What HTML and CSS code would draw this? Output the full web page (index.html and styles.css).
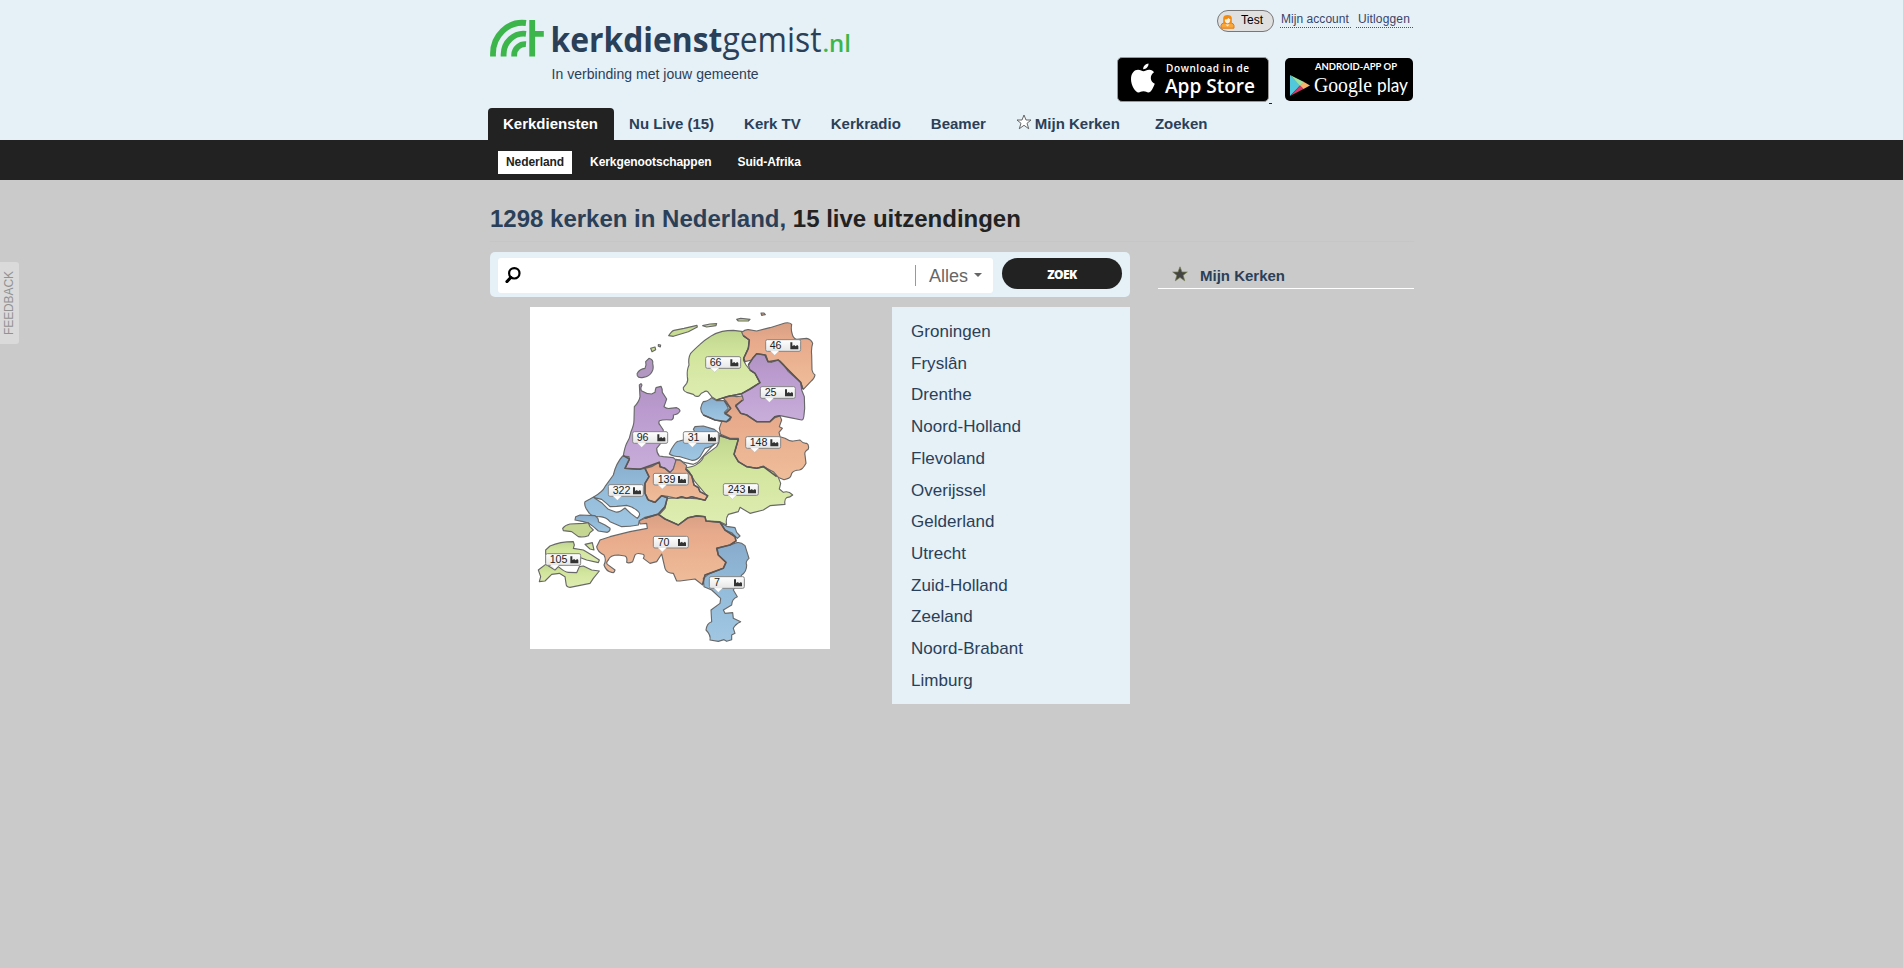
FILE: index.html
```html
<!DOCTYPE html>
<html lang="nl">
<head>
<meta charset="utf-8">
<title>Kerkdienstgemist.nl</title>
<link rel="stylesheet" href="styles.css">
</head>
<body>
<header class="header">
  <div class="wrap top">
    <div class="brand">
      <svg class="logo" viewBox="0 0 370 48" width="370" height="48">
        <g fill="none" stroke="#3cb54a" stroke-width="5.8">
          <path d="M3 40.500V38.500A29.500 31 0 0 1 36 7"/>
          <path d="M13.600 40.500V38.500A20 21 0 0 1 36 17.800"/>
          <path d="M24.200 40.500V38.500A11 11 0 0 1 36 28.200"/>
          <path d="M42.200 4V40.500M42.200 17.800H53.800" stroke-width="5.800"/>
        </g>
        <text class="logo-word" x="60.500" y="35.500" textLength="271" lengthAdjust="spacingAndGlyphs"><tspan class="logo-bold">kerkdienst</tspan>gemist</text>
        <text class="logo-nl" x="332.500" y="35.500" textLength="28.500" lengthAdjust="spacingAndGlyphs">.nl</text>
      </svg>
      <p class="tagline">In verbinding met jouw gemeente</p>
    </div>
    <div class="side">
      <div class="account">
        <span class="user">
          <svg viewBox="0 0 15 15" width="15" height="15"><path d="M1 14.200V11.500Q1.200 9.500 4 8.800L7.500 10L11 8.800Q13.800 9.500 14 11.500V14.200Z" fill="#f9a63a" stroke="#e27a10"/><path d="M3.200 8.800V4Q3.500 1 7.500 1T11.800 4V8.800L9 9.500H6Z" fill="#f08a10"/><path d="M4.800 5.500Q7.500 5.500 8.500 4Q9 5 10.300 5.300Q10.300 9.300 7.500 9.300T4.800 5.500Z" fill="#fff0dc"/><path d="M5.500 10.500L7.500 12.500L9.500 10.500" fill="#fff0dc"/></svg>
          Test</span>
        <a class="dotted">Mijn account</a>
        <a class="dotted">Uitloggen</a>
      </div>
      <div class="stores">
        <svg class="apple" viewBox="0 0 152 45" width="152" height="45">
          <rect x=".5" y=".5" width="151" height="44" rx="4.500" fill="#000" stroke="#999"/>
          <path d="M26.500 14.300C28 14.300 30 12.500 32.500 12.700C34.500 12.900 36 13.700 37 15.200C32.500 18 32.800 24.500 37.800 26.700C36.500 30 34 35.500 31.500 35.500C29.500 35.500 29 34.300 26.500 34.300C24 34.300 23.200 35.500 21.500 35.500C18.500 35.500 14 28.500 14 22.300C14 16 17.500 12.800 21 12.800C23.500 12.800 25.200 14.300 26.500 14.300ZM26.200 12.200C26 9 29 6.600 31.500 6.500C31.800 9.500 29 12.300 26.200 12.200Z" fill="#fff"/>
          <text x="49" y="15" class="store-small" textLength="83">Download in de</text>
          <text x="48" y="35.500" class="store-big" textLength="90" lengthAdjust="spacingAndGlyphs">App Store</text>
        </svg>
        <span class="dash"></span>
        <svg viewBox="0 0 128 43" width="128" height="43">
          <rect width="128" height="43" rx="5" fill="#000"/>
          <path d="M5 17L15 27.500L5 38Z" fill="#52c8dc"/><path d="M5 17L19 24L15 28Z" fill="#9ce2a0"/><path d="M5 38L15 27.500L18.500 31Z" fill="#d53a6c"/><path d="M15 27.500L18.500 23.700L25 27.500L18.500 31Z" fill="#f7b46a"/>
          <text x="30" y="12" class="play-small" textLength="82" lengthAdjust="spacingAndGlyphs">ANDROID-APP OP</text>
          <text x="29" y="34" class="play-google" textLength="58" lengthAdjust="spacingAndGlyphs">Google</text>
          <text x="92" y="34" class="play-play" textLength="31" lengthAdjust="spacingAndGlyphs">play</text>
        </svg>
      </div>
    </div>
  </div>
  <nav class="wrap tabs">
    <a class="tab active">Kerkdiensten</a><a class="tab">Nu Live (15)</a><a class="tab">Kerk TV</a><a class="tab">Kerkradio</a><a class="tab">Beamer</a><a class="tab fav"><svg viewBox="0 0 16 16" width="16" height="16"><path d="M8 1L10 6H15L11 9.300L12.700 14.700L8 11.300L3.300 14.700L5 9.300L1 6H6Z" fill="#fff" stroke="#555" stroke-width=".9"/></svg>Mijn Kerken</a><a class="tab">Zoeken</a>
  </nav>
</header>
<div class="subbar">
  <nav class="wrap subnav"><a class="sub current">Nederland</a><a class="sub">Kerkgenootschappen</a><a class="sub">Suid-Afrika</a></nav>
</div>
<main class="wrap content">
  <h1><span class="blue">1298 kerken in Nederland,</span> 15 live uitzendingen</h1>
  <div class="columns">
    <section class="main">
      <div class="search">
        <div class="field">
          <svg class="glass" viewBox="0 0 16 16" width="16" height="16"><circle cx="9.300" cy="6.300" r="5.200" fill="none" stroke="#000" stroke-width="2.200"/><path d="M5.800 10.500L2 14.500" stroke="#000" stroke-width="3.200" stroke-linecap="round"/></svg>
          <span class="filter">Alles <i class="caret"></i></span>
        </div>
        <button class="go"><span class="go-text">ZOEK</span></button>
      </div>
      <div class="row">
        <svg class="map" viewBox="0 6 900 1026" width="300" height="342">
          <defs>
            <linearGradient id="g" x2="0" y2="1"><stop stop-color="#bfd58f"/><stop offset=".35" stop-color="#d2e59d"/><stop offset="1" stop-color="#deedb2"/></linearGradient>
            <linearGradient id="o" x2="0" y2="1"><stop stop-color="#d9a085"/><stop offset=".3" stop-color="#e8ab8c"/><stop offset="1" stop-color="#efbd9a"/></linearGradient>
            <linearGradient id="p" x2="0" y2="1"><stop stop-color="#b092c2"/><stop offset=".3" stop-color="#bb9bcf"/><stop offset="1" stop-color="#c8add9"/></linearGradient>
            <linearGradient id="b" x2="0" y2="1"><stop stop-color="#88abcc"/><stop offset=".5" stop-color="#94bddb"/><stop offset="1" stop-color="#a0c6e2"/></linearGradient>
            <linearGradient id="l" x2="0" y2="1"><stop stop-color="#fff"/><stop offset=".5" stop-color="#eee"/><stop offset="1" stop-color="#ddd"/></linearGradient>
            <g id="tag"><path d="M5 0H100Q105 0 105 5V30Q105 35 100 35H39L27 47L15 35H5Q0 35 0 30V5Q0 0 5 0Z" fill="url(#l)"/><path d="M39 35H100Q105 35 105 30V5Q105 0 100 0H5Q0 0 0 5V30Q0 35 5 35H15" fill="none" stroke="#858585" stroke-width="3"/><path d="M15 35L27 47L39 35" fill="#fff" stroke="#aaa" stroke-width="1"/><path d="M74 8H80V19L86 16L89 20L95 16L98 20V29H74Z" fill="#333"/></g>
          </defs>
          <rect y="6" width="900" height="1026" fill="#fff"/>
          <g class="land">
            <path fill="url(#g)" d="M640 80L610 76Q592 76 577 79Q555 84 540 95Q522 106 510 118Q490 136 482 145Q474 160 477 180Q470 195 472 215Q475 228 470 235L460 248Q459 258 470 262L490 268Q498 278 508 272Q514 262 520 262Q528 256 533 260L545 275L560 285L590 275L635 266L660 252L690 233L675 205L660 195L648 180L640 165L655 130L658 105L640 92Z"/>
            <path fill="url(#o)" d="M635 82Q645 73 655 74L680 78L720 68L765 54Q778 51 785 58Q782 75 787 88Q790 100 800 103L830 100Q844 103 848 115Q843 130 845 150L846 195Q848 205 855 210Q853 222 842 230L820 253L812 232L785 205L750 168L725 172L714 170L708 150L680 148L665 165L645 170L641 160L655 130L658 105L640 92Z"/>
            <path fill="url(#p)" d="M680 146L705 150L714 170L725 172L745 165L760 178L775 200L812 232L815 255L823 275L824 310L822 330Q821 345 815 345L780 338L750 332L735 335L720 350L680 350L650 330L632 325L617 303L637 285L635 266L665 250L690 233L675 205L660 195L655 180L668 160Z"/>
            <path fill="url(#o)" d="M580 280L600 272L620 275L637 273L640 285L617 300L632 325L650 330L680 350L720 350L735 338L750 333L755 345L748 365L757 370L747 382L750 395L765 400Q780 410 790 408L810 405Q820 417 830 415Q838 420 835 432Q822 440 825 450L828 475Q818 494 808 495Q792 495 785 505Q782 518 775 520L762 524L740 515L725 500L700 483L680 490L650 485L625 470L612 448L620 420L625 400L600 400L572 388L568 370L575 350L600 345L585 330L602 310L590 290Z"/>
            <path fill="url(#b)" d="M545 278L560 287L583 287L595 310L583 322L603 335Q602 347 590 350Q570 350 555 345L520 330Q512 320 512 310Q514 298 520 290Q532 290 545 278Z"/>
            <path fill="url(#b)" d="M418 447Q424 430 432 420Q440 408 448 408L480 400L500 390L490 373L495 365L520 363L553 373L568 385L560 410Q555 422 525 430L510 455Q500 467 485 466L450 455Q430 455 418 447Z"/>
            <path fill="url(#g)" d="M568 393L600 402L625 403L612 448L625 470L650 485L680 490L700 485L730 500L745 517L752 535L748 552L760 562Q775 556 788 570Q780 577 770 578Q762 584 765 598L720 602L700 615L660 625L630 607L625 620L595 628Q586 640 590 660L570 650L528 648L523 635L500 632L470 640L445 660L405 642L385 632L405 610L412 580L450 578L510 582L533 575L495 530L478 500L465 488Q490 486 500 478Q520 465 520 455L560 425Q570 410 568 393Z"/>
            <path fill="url(#p)" d="M328 240L333 236L336 240Q330 250 334 257Q350 267 365 267L375 262Q376 252 378 248L393 244Q398 252 397 262L410 282L402 305Q412 312 420 310L440 308Q450 312 450 318Q445 328 430 330Q432 342 424 345Q400 343 388 347Q384 355 390 360L400 375L392 415L380 430Q380 445 388 453L400 455L430 458Q438 462 438 470L430 492L420 503L405 490L390 485L388 472L365 485L330 493L285 490L298 462L280 452Q284 428 290 415Q300 400 303 380Q312 360 312 345L313 305Q328 290 330 275Z"/>
            <path fill="url(#b)" d="M278 453L297 455L298 465L285 490L320 493L345 490L357 515L345 535V560L352 582L370 592L395 572L412 578L405 605L385 627L345 637L328 647L325 660Q300 665 275 665L240 650Q228 636 210 635Q190 636 178 625L168 610Q162 597 165 590L180 582L192 575Q218 560 225 545L250 510Q258 475 278 453Z"/>
            <path fill="#fff" d="M190 577L215 583Q230 595 240 605L260 604L290 601Q310 605 325 620Q334 628 322 640L302 625L285 609Q265 625 255 620L235 613L217 595Z"/>
            <path fill="url(#o)" d="M345 490L365 485L388 472L390 485L405 490L420 503L430 492L438 465L450 465L470 482L467 492L485 512L492 540L505 548L510 560L533 572L525 586L510 582L485 575L470 580L455 575L440 580L412 574L395 572L375 592L355 585L345 565V535L357 515Z"/>
            <path fill="url(#o)" d="M328 647L345 640L385 628L405 642L445 660L475 638L500 633L525 635L528 648L570 652L585 675L615 695L618 708L600 720L560 730L565 750L588 772L580 790L525 810L518 840L495 822L450 828L440 828L430 805Q410 805 405 790L395 747L380 770L360 775L340 760Q347 748 335 747Q320 743 315 750L308 770Q296 776 290 772Q293 757 285 753L265 750Q240 750 235 765Q227 773 232 778L255 795Q252 806 245 802Q228 799 222 780Q230 765 222 750Q202 740 200 725L210 705L240 695L300 680L352 670L350 655L330 657Z"/>
            <path fill="url(#b)" d="M573 653L590 664L615 668L620 682L630 693L622 700L605 683L585 675Z"/>
            <path fill="url(#b)" d="M620 713Q632 710 645 722L657 760Q645 770 650 780Q650 800 635 810L610 855L622 875Q605 882 605 900L580 915L585 925L608 923L610 940L632 950Q615 958 610 970L615 985L605 990V1004L590 1009L582 1004L565 1009L540 1005Q543 990 528 975Q530 955 545 950L543 915L570 895L572 880L545 855L522 845L520 820L535 808L580 790L588 772L565 750L562 730L600 720Z"/>
            <path fill="url(#b)" d="M135 645L137 635L150 630L195 632Q207 640 205 650L225 660L240 670Q242 677 232 682L205 678L190 665L175 654L160 650Z"/>
            <path fill="#c5d693" d="M98 670Q105 660 120 657L160 655L175 653L180 665L190 675Q180 680 175 692Q160 698 145 695L125 680L100 677Z"/>
            <path fill="url(#g)" d="M165 718L187 713L192 735L180 732Z"/>
            <path fill="url(#g)" d="M47 735L60 723Q90 710 130 710L133 720L130 730L160 735L185 750L208 765L205 773L170 765L152 758L150 770L90 780L47 772Z"/>
            <path fill="url(#g)" d="M25 795L47 778L75 795L85 785Q105 802 115 802L140 803L148 785L160 783L185 795L208 798L190 820L180 835L120 847Q108 847 108 835L105 815L88 805L65 808L45 828L28 830L32 815Z"/>
            <path fill="#b197c2" d="M357 160Q371 165 368 175Q372 192 366 200Q358 215 340 217Q326 220 322 212Q320 205 323 203Q330 192 345 190Q350 180 347 170Z"/>
            <path fill="#c8dc92" d="M362 130L375 126L377 134L366 140ZM385 119L392 120L391 126L385 124ZM416 92Q425 78 432 76L462 70L501 61L502 66L475 80L430 94ZM518 62L540 57L560 56L558 62L530 66ZM620 43L632 40L660 43L655 48L625 48Z"/>
            <path fill="#d99a78" d="M693 24L702 24L706 29L695 31Z"/>
            <path fill="none" d="M438 463Q450 463 462 472L490 478Q505 473 512 462L545 425Q555 415 565 395"/>
          </g>
          <path class="border" d="M640 92L658 105L655 130L641 160L645 172M660 195L675 205L690 233L660 252L635 266L590 275L560 285M655 180L668 160L680 146L705 150L714 170L745 165L785 205L812 232L818 253M637 285L617 303L632 325L650 330L680 350H720L735 335L750 332M583 287L602 310L585 326L603 337L590 350L555 345L520 330M568 390L600 402L625 403L612 448L625 470L650 485L680 490L700 485L740 515M280 452L298 462L285 490L330 493L388 472L390 485L405 490L420 503M345 490L357 515L345 535V565L355 585L375 592L395 572L412 578L405 605L385 627L345 640M467 492L485 512L492 540L505 548L510 560L533 572L525 586L510 582L485 575L470 580L455 575L440 580M385 628L405 642L445 660L475 638L500 633L525 635L528 648L570 652L585 675L615 695L618 708L600 720L560 730L565 750L588 772L580 790L525 810L518 838"/>
          <g class="nums">
            <use href="#tag" x="308" y="380"/><text x="320" y="408">96</text>
            <use href="#tag" x="527" y="155"/><text x="539" y="183">66</text>
            <use href="#tag" x="707" y="104"/><text x="719" y="132">46</text>
            <use href="#tag" x="691" y="245"/><text x="704" y="273">25</text>
            <use href="#tag" x="460" y="380"/><text x="473" y="408">31</text>
            <use href="#tag" x="647" y="395"/><text x="659" y="423">148</text>
            <use href="#tag" x="370" y="505"/><text x="383" y="533">139</text>
            <use href="#tag" x="235" y="539"/><text x="248" y="567">322</text>
            <use href="#tag" x="580" y="536"/><text x="593" y="564">243</text>
            <use href="#tag" x="370" y="694"/><text x="383" y="722">70</text>
            <use href="#tag" x="47" y="746"/><text x="59" y="774">105</text>
            <use href="#tag" x="538" y="815"/><text x="552" y="843">7</text>
          </g>
        </svg>
        <ul class="provinces">
          <li>Groningen</li><li>Fryslân</li><li>Drenthe</li><li>Noord-Holland</li><li>Flevoland</li><li>Overijssel</li><li>Gelderland</li><li>Utrecht</li><li>Zuid-Holland</li><li>Zeeland</li><li>Noord-Brabant</li><li>Limburg</li>
        </ul>
      </div>
    </section>
    <aside class="mine">
      <svg viewBox="0 0 16 16" width="16" height="16"><path d="M8 .8L10 6H15.300L11.200 9.300L12.700 14.800L8 11.500L3.300 14.800L4.800 9.300L.7 6H6Z" fill="#444" stroke="#75804f" stroke-width=".7"/></svg>
      <span>Mijn Kerken</span>
    </aside>
  </div>
</main>
<a class="feedback">FEEDBACK</a>
</body>
</html>
```
FILE: styles.css
```css
* { box-sizing: border-box; }
body { margin: 0; background: #cacaca; color: #222; font-family: "Liberation Sans", Arial, sans-serif; font-size: 12px; }
.wrap { width: 925px; margin: 0 auto; padding-left: 1px; }
.header { height: 140px; background: #e5f0f7; color: #2a4058; }
.top { display: flex; justify-content: space-between; height: 108px; }
.brand { padding-top: 16px; }
.logo { display: block; overflow: visible; }
.logo text { font-family: "Open Sans", sans-serif; }
.logo .logo-word { font-size: 34px; fill: #2a4058; }
.logo .logo-bold { font-weight: 700; }
.logo .logo-nl { font-size: 24px; font-weight: 600; fill: #3cb54a; }
.tagline { margin: 2px 0 0 61.500px; font-size: 14px; line-height: 16px; letter-spacing: .03px; }
.side { display: flex; flex-direction: column; align-items: flex-end; padding-right: 1px; }
.account { display: flex; height: 57px; padding-top: 10px; align-items: flex-start; }
.user { display: flex; align-items: center; gap: 6px; width: 57px; height: 22px; padding: 0 0 2px 2px; border: 1px solid #777; border-radius: 11px; background: #e0e0e0; color: #000; }
.user svg { margin-top: 2px; }
.dotted { margin-left: 6px; padding: 0 2px 0 1px; height: 18px; line-height: 19px; border-bottom: 1px dotted #456; color: #3a4468; letter-spacing: .04px; }
.dotted + .dotted { margin-left: 5px; padding: 0 3px 0 2px; letter-spacing: .15px; }
.stores { display: flex; align-items: flex-start; }
.stores svg + .dash + svg { margin-top: 1px; }
.dash { width: 3px; height: 1px; margin: 46px 13px 0 0; background: #222; }
.store-small, .store-big { font-family: "Open Sans", sans-serif; font-weight: 600; fill: #fff; }
.store-small { font-size: 10px; }
.store-big { font-size: 20px; }
.play-small { font-family: Lato, sans-serif; font-size: 9px; font-weight: 700; fill: #fff; }
.play-google { font-family: "Liberation Serif", serif; font-size: 22px; fill: #fff; }
.play-play { font-family: Lato, sans-serif; font-size: 20px; fill: #fff; }
.tabs { display: flex; height: 32px; padding: 0; position: relative; left: -1px; }
.tab { padding: 0 15px; font-size: 15px; line-height: 31px; font-weight: 700; white-space: nowrap; }
.active { padding: 0 16px 0 15px; background: #222; color: #fff; border-radius: 4px 4px 0 0; }
.fav { display: flex; padding-right: 20px; gap: 3px; }
.fav svg { margin-top: 6px; }
.subbar { height: 40px; background: #222; }
.subnav { display: flex; gap: 10px; padding: 11px 0 0 9px; }
.sub { height: 23px; padding: 0 8px; line-height: 22px; font-weight: 700; color: #fff; letter-spacing: -.07px; }
.current { background: #fff; color: #222; }
h1 { height: 62px; margin: 0; padding-top: 25px; border-bottom: 1px solid #c6c6c6; font-size: 24px; line-height: 28px; }
.blue { color: #2a4058; }
.columns { display: flex; justify-content: space-between; padding-top: 10px; }
.main { width: 640px; }
.search { display: flex; height: 45px; padding: 6px 8px; gap: 9px; background: #e5f0f7; border-radius: 5px; }
.field { display: flex; justify-content: space-between; width: 495px; height: 35px; padding: 7px 11px 0 7px; background: #fff; border-radius: 3px; }
.glass { margin-top: 2px; }
.filter { display: flex; height: 21px; padding: 0 0 0 13px; border-left: 1px solid #999; color: #666; font-size: 18px; line-height: 22px; }
.caret { width: 0; height: 0; margin: 8px 0 0 6px; border: 4px solid transparent; border-top-color: #666; border-bottom: 0; }
.go { width: 120px; height: 31px; padding: 2px 0 0; border: 0; border-radius: 16px; background: #222; color: #fff; font: 800 12px "Open Sans", sans-serif; letter-spacing: -.5px; }
.row { display: flex; justify-content: space-between; padding: 10px 0 0 40px; }
.map { display: block; }
.land path { stroke: #686868; stroke-width: 3.4; stroke-linejoin: round; }
.border { fill: none; stroke: #5c5655; stroke-width: 4.6; stroke-linejoin: round; }
.nums text { font-size: 32px; fill: #222; }
.provinces { width: 238px; height: 397px; margin: 0; padding: 9px 19px 0; list-style: none; background: #e5f0f7; color: #2a4058; font-size: 17px; line-height: 31.700px; letter-spacing: .03px; }
.mine { display: flex; width: 256px; height: 37px; padding: 14px 0 0 14px; gap: 12px; border-bottom: 1px solid #fff; color: #2a4058; font-size: 15px; font-weight: 700; line-height: 20px; }
.feedback { position: absolute; left: 0; top: 262px; width: 19px; height: 82px; padding-right: 1px; background: #dadada; color: #929292; font-size: 12px; line-height: 17px; text-align: center; writing-mode: vertical-rl; transform: rotate(180deg); border-radius: 3px 0 0 3px; letter-spacing: -.1px; }
```
